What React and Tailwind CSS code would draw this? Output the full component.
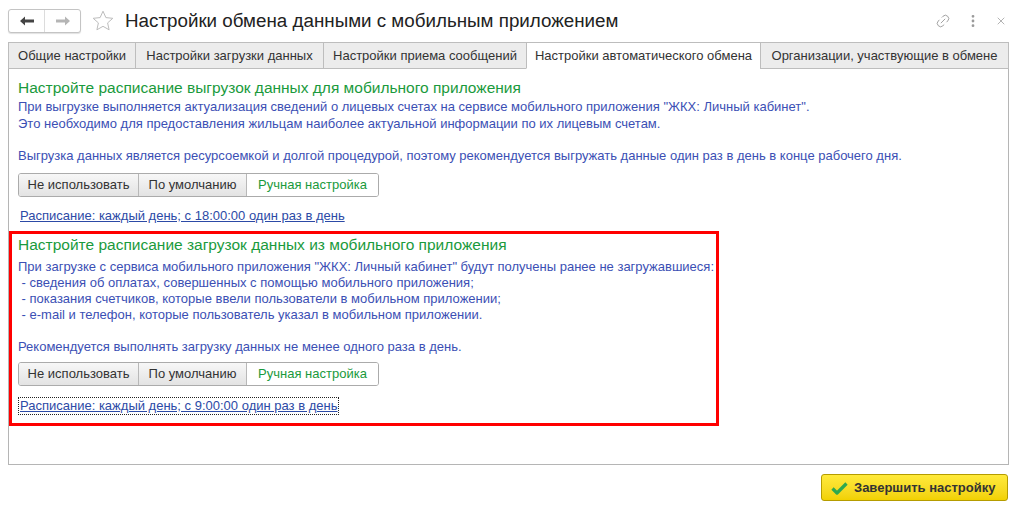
import React from "react";
import { Link2, EllipsisVertical, X } from "lucide-react";

const tabs = [
  { label: "Общие настройки", w: "w-[128px]" },
  { label: "Настройки загрузки данных", w: "w-[189px]" },
  { label: "Настройки приема сообщений", w: "w-[204px]" },
  { label: "Настройки автоматического обмена", w: "w-[235px]", active: true },
  { label: "Организации, участвующие в обмене", w: "w-[249px]" },
];

function ModeButtons() {
  return (
    <div className="flex h-[24px] w-[361px] rounded-[3px] border border-[#ababab] overflow-hidden text-[13px] leading-[22px]">
      <div className="w-[120px] text-center text-[#333] bg-gradient-to-b from-[#f7f7f7] to-[#e3e3e3] border-r border-[#b8b8b8]">
        Не использовать
      </div>
      <div className="w-[108px] text-center text-[#333] bg-gradient-to-b from-[#f7f7f7] to-[#e3e3e3] border-r border-[#b8b8b8]">
        По умолчанию
      </div>
      <div className="flex-1 text-center text-[#1a9a3c] bg-white">Ручная настройка</div>
    </div>
  );
}

export default function App() {
  return (
    <div
      className="relative w-[1017px] h-[506px] bg-white overflow-hidden text-[#333]"
      style={{ fontFamily: '"Liberation Sans", Arial, sans-serif' }}
    >
      {/* header */}
      <div className="flex items-center h-[41px] pl-[8px] pr-[10px]">
        <div className="flex h-[24px] w-[73px] rounded-[3px] border border-[#c4c4c4] shadow-[0_1px_1px_rgba(0,0,0,0.12)] bg-white">
          <div className="w-[36px] flex items-center justify-center border-r border-[#dcdcdc]">
            <svg width="14" height="10" viewBox="0 0 14 10">
              <path d="M0 5 L5 0.5 L5 3.5 L14 3.5 L14 6.5 L5 6.5 L5 9.5 Z" fill="#444" />
            </svg>
          </div>
          <div className="flex-1 flex items-center justify-center">
            <svg width="14" height="10" viewBox="0 0 14 10">
              <path d="M14 5 L9 0.5 L9 3.5 L0 3.5 L0 6.5 L9 6.5 L9 9.5 Z" fill="#b5b5b5" />
            </svg>
          </div>
        </div>
        <svg className="ml-[10px]" width="24" height="24" viewBox="0 0 24 24">
          <path
            d="M12 2.2 L14.9 8.6 L21.8 9.3 L16.6 13.9 L18.1 20.8 L12 17.3 L5.9 20.8 L7.4 13.9 L2.2 9.3 L9.1 8.6 Z"
            fill="none"
            stroke="#bdbdbd"
            strokeWidth="1"
            strokeLinejoin="round"
          />
        </svg>
        <div className="ml-[10px] text-[18.8px] leading-[24px] text-[#222]">
          Настройки обмена данными с мобильным приложением
        </div>
        <div className="ml-auto flex items-center gap-[14px] text-[#9a9a9a]">
          <Link2 size={16} strokeWidth={1.3} className="-rotate-45" />
          <EllipsisVertical size={16} strokeWidth={2.2} />
          <X size={12} strokeWidth={1.5} />
        </div>
      </div>

      {/* tabs */}
      <div className="flex pl-[8px] mt-[1px] relative z-10">
        {tabs.map((t, i) => (
          <div
            key={t.label}
            className={`${t.w} h-[27px] ${i > 0 ? "-ml-px" : ""} border border-[#bdbdbd] text-[13px] leading-[25px] text-center ${
              t.active ? "bg-white border-b-white" : "bg-[#ececec] border-b-[#bdbdbd]"
            }`}
          >
            {t.label}
          </div>
        ))}
      </div>

      {/* panel */}
      <div className="mx-[8px] -mt-px h-[397px] border border-[#b5b5b5] pt-[9px]">
        <div className="pl-[9px]">
          <div className="text-[15.5px] leading-[20px] text-[#1a9a3c]">
            Настройте расписание выгрузок данных для мобильного приложения
          </div>
          <div className="mt-[1px] text-[13px] leading-[16px] text-[#3b4fb4]">
            <div>
              При выгрузке выполняется актуализация сведений о лицевых счетах на сервисе мобильного приложения "ЖКХ: Личный кабинет".
            </div>
            <div className="mt-[1px]">Это необходимо для предоставления жильцам наиболее актуальной информации по их лицевым счетам.</div>
            <div className="mt-[16px]">
              Выгрузка данных является ресурсоемкой и долгой процедурой, поэтому рекомендуется выгружать данные один раз в день в конце рабочего дня.
            </div>
          </div>
          <div className="mt-[9px]">
            <ModeButtons />
          </div>
          <div className="mt-[11px] ml-[2px] text-[13px] leading-[16px] text-[#2c4aa6] underline">
            Расписание: каждый день; с 18:00:00 один раз в день
          </div>
        </div>

        <div className="mt-[7px] w-[710px] border-[3px] border-[#ff0000] pl-[6px] pt-[1px] pb-[6px]">
          <div className="text-[15.5px] leading-[20px] text-[#1a9a3c]">
            Настройте расписание загрузок данных из мобильного приложения
          </div>
          <div className="mt-[4px] text-[13px] leading-[16px] text-[#3b4fb4]">
            <div>
              При загрузке с сервиса мобильного приложения "ЖКХ: Личный кабинет" будут получены ранее не загружавшиеся:
            </div>
            <div>&nbsp;- сведения об оплатах, совершенных с помощью мобильного приложения;</div>
            <div>&nbsp;- показания счетчиков, которые ввели пользователи в мобильном приложении;</div>
            <div>&nbsp;- e-mail и телефон, которые пользователь указал в мобильном приложении.</div>
            <div className="mt-[16px]">Рекомендуется выполнять загрузку данных не менее одного раза в день.</div>
          </div>
          <div className="mt-[7px]">
            <ModeButtons />
          </div>
          <div className="mt-[11px] inline-block border border-dotted border-[#222] px-[1px] text-[13px] leading-[16px] text-[#2c4aa6] underline">
            Расписание: каждый день; с 9:00:00 один раз в день
          </div>
        </div>
      </div>

      {/* footer */}
      <div className="flex justify-end pr-[9px] mt-[9px]">
        <div className="flex items-center h-[27px] w-[187px] rounded-[3px] border border-[#b59c00] bg-gradient-to-b from-[#ffea3a] to-[#f2d100] pl-[9px]">
          <svg width="17" height="14" viewBox="0 0 17 14">
            <path d="M1.5 7.5 L6 12 L15.5 2.5" fill="none" stroke="#2fa84f" strokeWidth="3.2" strokeLinejoin="round" />
          </svg>
          <span className="ml-[6px] text-[13px] font-bold text-[#333]">Завершить настройку</span>
        </div>
      </div>
    </div>
  );
}
